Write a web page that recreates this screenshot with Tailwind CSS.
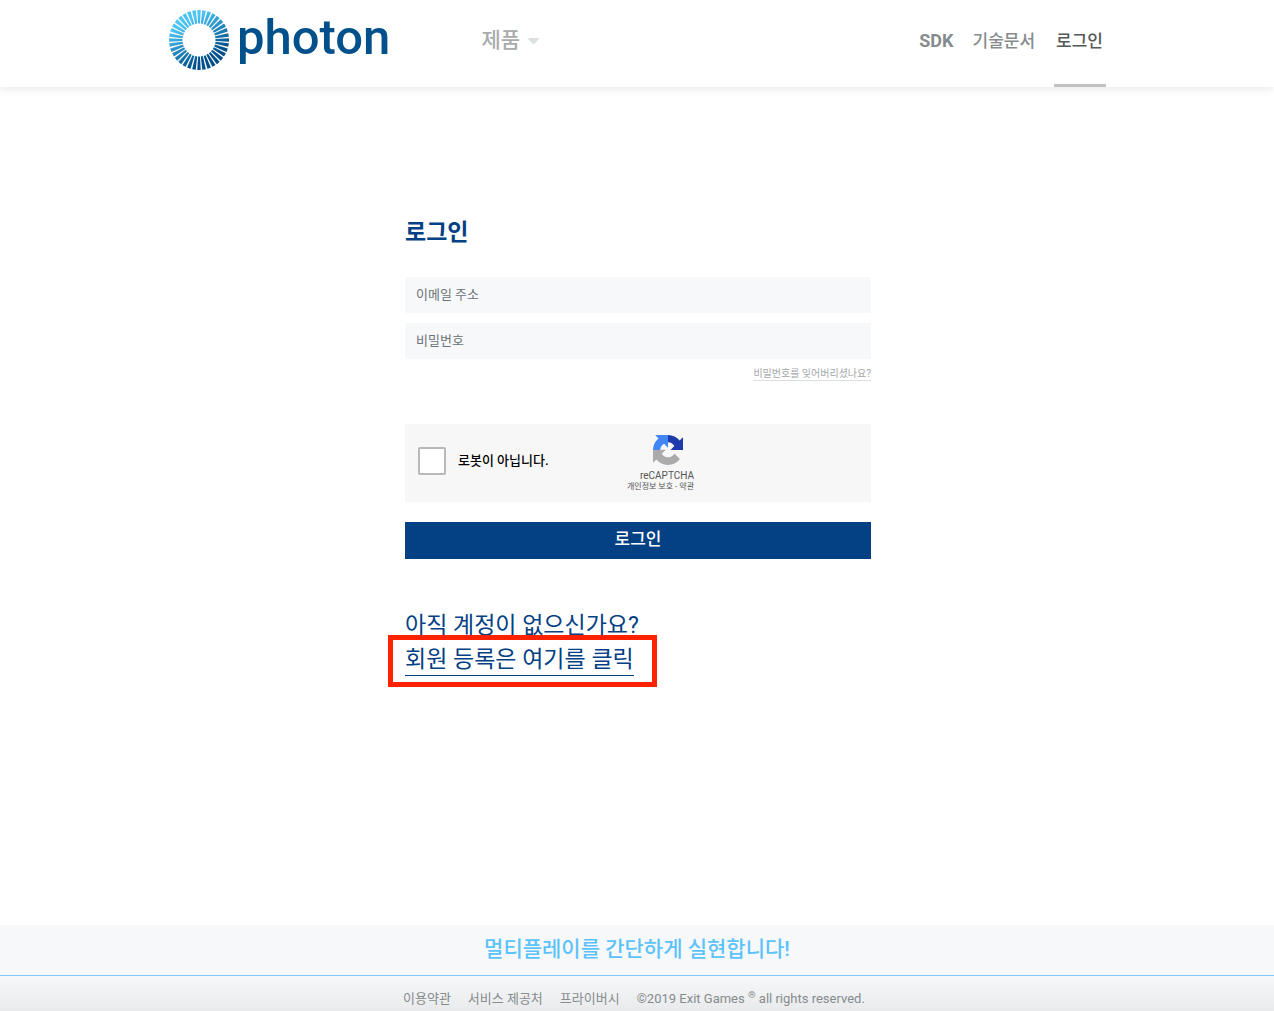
<!DOCTYPE html>
<html lang="ko">
<head>
    <meta charset="UTF-8">
    <meta name="viewport" content="width=device-width, initial-scale=1.0">
    <title>Photon 로그인</title>
    <script src="https://cdn.jsdelivr.net/npm/@tailwindcss/browser@4"></script>
</head>
<body class="flex min-h-screen flex-col bg-white font-['Roboto','Noto_Sans_CJK_KR',sans-serif] text-[#868c8e]">
    <header class="h-[87px] shadow-[0_2px_8px_rgba(0,0,0,0.09)]">
        <div class="mx-auto flex h-full max-w-[938px] items-center justify-between">
            <div class="flex h-full items-center pb-[7px]">
                <a href="#" class="flex items-center gap-[7px] text-[#00508b]">
                    <svg class="size-[62px]" viewBox="0 0 62 62" fill="none">
                        <defs>
                            <linearGradient id="ring" gradientUnits="userSpaceOnUse" x1="14" y1="6" x2="44" y2="56">
                                <stop offset="0.15" stop-color="#4cc4f4"/>
                                <stop offset="0.85" stop-color="#00508b"/>
                            </linearGradient>
                        </defs>
                        <circle cx="31" cy="31" r="23.25" stroke="url(#ring)" stroke-width="13.5" pathLength="360" stroke-dasharray="7 3" stroke-dashoffset="3.5"/>
                    </svg>
                    <span class="pb-[5px] text-[49px] leading-[57px] font-medium">photon</span>
                </a>
                <a href="#" class="ml-[91px] flex items-center gap-2 pt-[2px] text-[21px] font-medium text-[#a9abac]">제품
                    <svg class="h-[6px] w-[11px]" viewBox="0 0 11 6" fill="#dcdfe0"><path d="M1 0h9q1.500 .5 .5 1.500L6.500 5.500q-1 1-2 0L.5 1.500Q-.5 .5 1 0z"/></svg>
                </a>
            </div>
            <nav class="flex h-full gap-[19px] text-[17px] leading-[82px] font-medium">
                <a href="#" class="text-[18px] font-bold">SDK</a>
                <a href="#">기술문서</a>
                <a href="#" class="border-b-[3px] border-[#c2c2c2] pr-[3px] pl-[2px] text-[#555859]">로그인</a>
            </nav>
        </div>
    </header>

    <main class="mx-auto w-full max-w-[468px] flex-1 pt-32 pl-[2px] text-[#044084]">
        <h1 class="text-[23px] leading-9 font-bold">로그인</h1>
        <form class="mt-[26px]">
            <input type="email" aria-label="이메일 주소" placeholder="이메일 주소" class="block h-9 w-full bg-[#f7f8fa] px-[11px] pb-[2px] text-[13px] placeholder:text-[#6c7377]">
            <input type="password" aria-label="비밀번호" placeholder="비밀번호" class="mt-[10px] block h-9 w-full bg-[#f7f8fa] px-[11px] pb-[2px] text-[13px] placeholder:text-[#6c7377]">
            <div class="mt-2 flex justify-end">
                <a href="#" class="border-b border-[#dcdfe0] text-[10px] leading-[13px] text-[#a3a7a9]">비밀번호를 잊어버리셨나요?</a>
            </div>
            <div class="mt-[43px] flex h-[78px] items-center bg-[#f7f7f7] pl-[13px]">
                <label class="flex w-[212px] items-center gap-3 pb-1 text-[13px] font-medium text-black">
                    <input type="checkbox" class="size-7 appearance-none rounded-[2px] border-2 border-[#b9b9b9] bg-white">
                    로봇이 아닙니다.
                </label>
                <div class="flex w-16 flex-col items-end text-[#555]">
                    <svg class="mr-[11px] mb-1 size-[30px]" viewBox="0 0 64 64">
                        <path fill="#1c3aa9" d="M64 31.955l-.016-1.370V4.687l-7.160 7.160C50.965 4.674 42.033.093 32.050.093v15.450a15.800 15.800 0 0 1 13.580 8.020l-8.390 8.390z"/>
                        <path fill="#4285f4" d="M32 .094H4.600l7.160 7.160C4.589 13.115.009 22.050.009 32.030h15.450a15.800 15.800 0 0 1 8.020-13.580L32 27z"/>
                        <path fill="#ababab" d="M.001 32.045v27.260l7.160-7.160c5.870 7.180 14.790 11.760 24.790 11.760 10.380 0 19.630-4.920 25.480-12.560L45.690 39.500a15.700 15.700 0 0 1-4.760 5.350c-1.980 1.550-4.780 2.810-8.660 2.810-.47 0-.83-.06-1.100-.16a15.700 15.700 0 0 1-12.380-7.570l8.290-8.290z"/>
                    </svg>
                    <span class="text-[10px] leading-[13px]">reCAPTCHA</span>
                    <span class="text-[8px] leading-[10px] whitespace-nowrap"><a href="#">개인정보 보호</a> - <a href="#">약관</a></span>
                </div>
            </div>
            <button type="submit" class="mt-5 block h-[37px] w-full bg-[#044084] pb-[2px] text-[17px] font-medium text-white">로그인</button>
        </form>
        <div class="mt-[50px] text-[23px] leading-[34px]">
            <p>아직 계정이 없으신가요?</p>
            <p class="relative">
                <a href="#" class="inline-block border-b border-[#044084] leading-[30px]">회원 등록은 여기를 클릭</a>
                <span class="pointer-events-none absolute -top-2 -left-[17px] h-[52px] w-[269px] border-[5px] border-[#ff2200]"></span>
            </p>
        </div>
    </main>

    <footer class="bg-[#f7f8fa]">
        <p class="border-b border-[#82caf5] pb-[2px] text-center text-[21px] leading-[48px] font-medium text-[#5cc3fa]">멀티플레이를 간단하게 실현합니다!</p>
        <div class="bg-linear-to-b from-[#f7f8fa] to-[#e9eaec]">
            <div class="mx-auto flex h-[35px] max-w-[468px] items-center gap-[17px] pt-[10px] text-[13px]">
                <a href="#">이용약관</a>
                <a href="#">서비스 제공처</a>
                <a href="#">프라이버시</a>
                <span>©2019 Exit Games <sup>®</sup> all rights reserved.</span>
            </div>
        </div>
    </footer>
</body>
</html>
